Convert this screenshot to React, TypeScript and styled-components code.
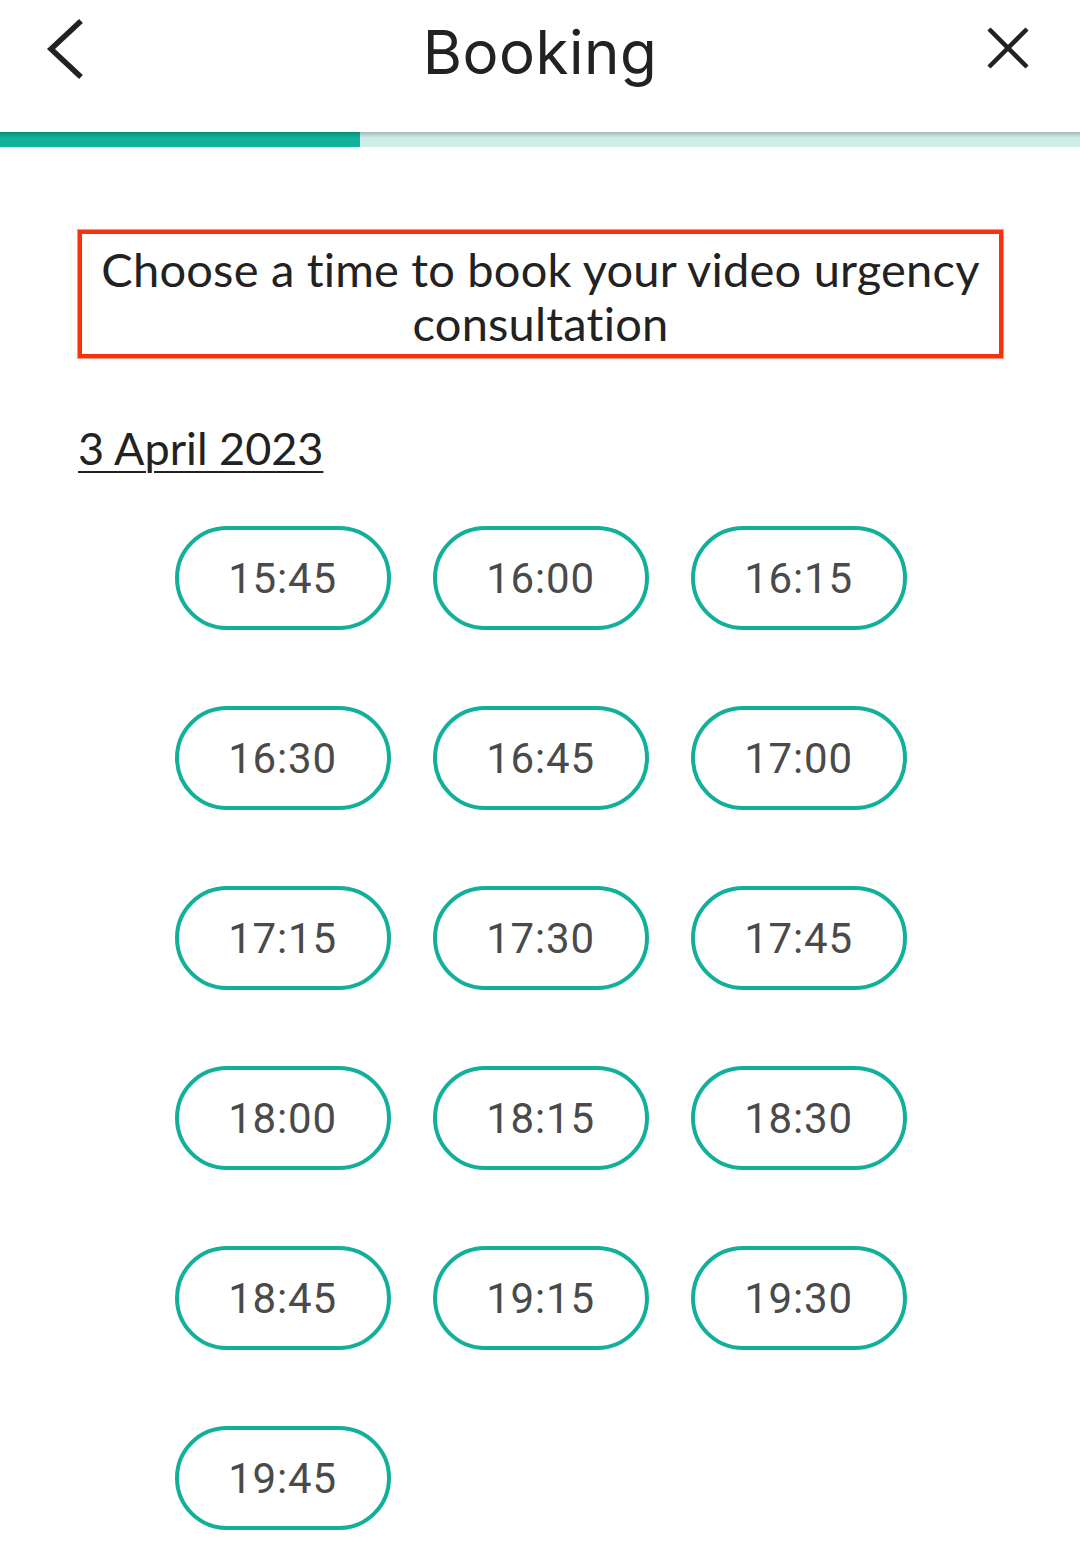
import styled, { createGlobalStyle } from "styled-components";

const GlobalStyle = createGlobalStyle`
  html, body {
    margin: 0;
    padding: 0;
    background: #ffffff;
  }
  body {
    font-family: "Lato", "Open Sans", sans-serif;
  }
`;

const Page = styled.div`
  width: 1080px;
  min-height: 1547px;
  background: #ffffff;
`;

const Header = styled.header`
  height: 132px;
  display: grid;
  grid-template-columns: 120px 1fr 120px;
  align-items: center;
`;

const IconButton = styled.button<{ $align: "start" | "end" }>`
  border: 0;
  background: none;
  padding: 0;
  display: flex;
  justify-content: ${(p) => (p.$align === "start" ? "flex-start" : "flex-end")};
  align-self: start;
  margin-top: ${(p) => (p.$align === "start" ? "19px" : "27px")};
  padding-left: ${(p) => (p.$align === "start" ? "45px" : "0")};
  padding-right: ${(p) => (p.$align === "end" ? "51px" : "0")};
  cursor: pointer;
`;

const Title = styled.h1`
  margin: 0;
  margin-top: -28px;
  text-align: center;
  font-family: "Inter", "Noto Sans", sans-serif;
  font-weight: 400;
  font-size: 60px;
  color: #222222;
  letter-spacing: 0.5px;
`;

const Progress = styled.div`
  height: 15px;
  background: #cfeee8;
  position: relative;
  overflow: hidden;

  &::after {
    content: "";
    position: absolute;
    inset: 0;
    height: 6px;
    background: linear-gradient(rgba(0, 0, 0, 0.22), rgba(0, 0, 0, 0));
  }
`;

const ProgressFill = styled.div`
  height: 100%;
  background: #12b39c;
`;

const Content = styled.main`
  padding: 83px 77px 0 78px;
`;

const Notice = styled.div`
  border: 4px solid #f5310e;
  padding: 8px 0 4px;
  text-align: center;
  font-size: 47px;
  line-height: 54px;
  color: #222222;
  letter-spacing: 0.2px;
  box-shadow: 0 0 0.6px 0.6px rgba(245, 49, 14, 0.5);
`;

const DateLabel = styled.h2`
  margin: 62px 0 0;
  font-family: "Lato", "Open Sans", sans-serif;
  font-weight: 400;
  font-size: 45px;
  line-height: 56px;
  color: #222222;
  text-decoration: underline;
  text-decoration-thickness: 2px;
  text-underline-offset: 6px;
`;

const SlotGrid = styled.div`
  margin: 50px auto 0;
  width: 732px;
  display: grid;
  grid-template-columns: repeat(3, 216px);
  column-gap: 42px;
  row-gap: 76px;
`;

const Slot = styled.button`
  height: 104px;
  border: 4.5px solid #12b09a;
  border-radius: 52px;
  background: #ffffff;
  font-family: "Roboto", "Noto Sans", sans-serif;
  font-size: 42px;
  color: #4a4a4a;
  letter-spacing: 0.8px;
  cursor: pointer;
`;

const times = [
  "15:45", "16:00", "16:15",
  "16:30", "16:45", "17:00",
  "17:15", "17:30", "17:45",
  "18:00", "18:15", "18:30",
  "18:45", "19:15", "19:30",
  "19:45",
];

function BackIcon() {
  return (
    <svg width="40" height="60" viewBox="0 0 40 60">
      <path d="M36 2 L6 30 L36 58" fill="none" stroke="#222" strokeWidth="5.5" />
    </svg>
  );
}

function CloseIcon() {
  return (
    <svg width="42" height="42" viewBox="0 0 42 42">
      <path d="M2 2 L40 40 M40 2 L2 40" fill="none" stroke="#222" strokeWidth="4.5" />
    </svg>
  );
}

export default function App() {
  const progress = 360;
  return (
    <Page>
      <GlobalStyle />
      <Header>
        <IconButton $align="start" aria-label="Back">
          <BackIcon />
        </IconButton>
        <Title>Booking</Title>
        <IconButton $align="end" aria-label="Close">
          <CloseIcon />
        </IconButton>
      </Header>
      <Progress>
        <ProgressFill style={{ width: progress }} />
      </Progress>
      <Content>
        <Notice>
          Choose a time to book your video urgency
          <br />
          consultation
        </Notice>
        <DateLabel>3 April 2023</DateLabel>
        <SlotGrid>
          {times.map((t) => (
            <Slot key={t}>{t}</Slot>
          ))}
        </SlotGrid>
      </Content>
    </Page>
  );
}
